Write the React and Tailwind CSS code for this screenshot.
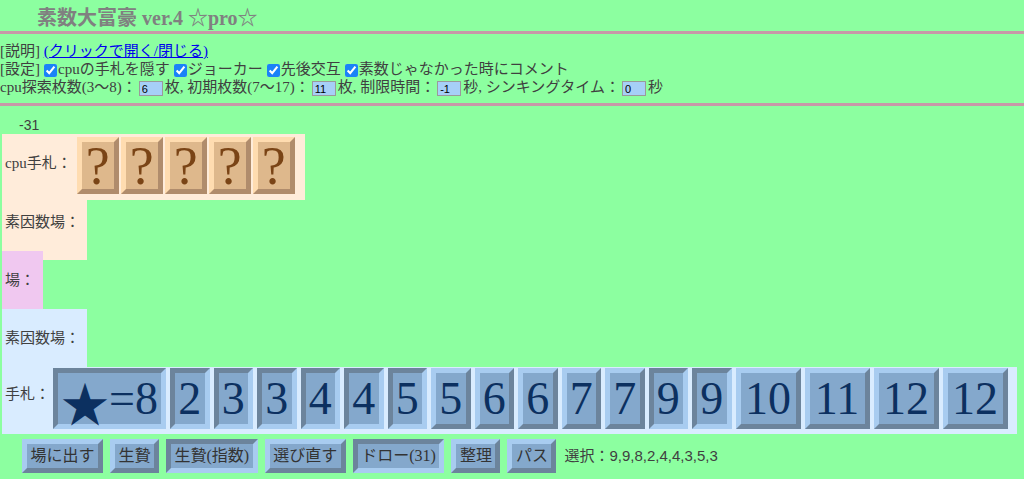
import React from 'react';

const serif = { fontFamily: '"Liberation Serif", "Noto Sans CJK JP", serif' };
const sans = { fontFamily: '"Liberation Sans", "Noto Sans CJK JP", sans-serif' };

const OUT = 'border-t-[#a8ccf0] border-l-[#a8ccf0] border-b-[#6c849c] border-r-[#6c849c]';
const IN = 'border-t-[#6c849c] border-l-[#6c849c] border-b-[#a8ccf0] border-r-[#a8ccf0]';

const hand = [
  { t: '★=8', sel: true },
  { t: '2', sel: true },
  { t: '3', sel: true },
  { t: '3', sel: true },
  { t: '4', sel: true },
  { t: '4', sel: true },
  { t: '5', sel: true },
  { t: '5', sel: false },
  { t: '6', sel: false },
  { t: '6', sel: false },
  { t: '7', sel: false },
  { t: '7', sel: false },
  { t: '9', sel: true },
  { t: '9', sel: true },
  { t: '10', sel: false },
  { t: '11', sel: false },
  { t: '12', sel: false },
  { t: '12', sel: false },
];

const buttons = [
  { t: '場に出す', sel: false },
  { t: '生贄', sel: false },
  { t: '生贄(指数)', sel: true },
  { t: '選び直す', sel: false },
  { t: 'ドロー(31)', sel: true },
  { t: '整理', sel: false },
  { t: 'パス', sel: false },
];

const cardWidth = (t) => {
  if (t.length === 1) return 'w-[39.5px]';
  if (t.length === 2) return 'w-[65px]';
  return 'w-[113px]';
};

const Card = ({ t, sel }) => (
  <div
    className={`flex h-[61px] shrink-0 items-center justify-center border-[5px] bg-[#84a8cc] text-[46px] leading-none text-[#0c3060] ${sel ? IN : OUT} ${cardWidth(t)}`}
  >
    {t.startsWith('★') ? (
      <>
        <span style={{ fontFamily: '"Noto Sans CJK JP", sans-serif' }} className="mt-[4px] text-[48px]">★</span>
        <span>=8</span>
      </>
    ) : (
      t
    )}
  </div>
);

const CpuCard = () => (
  <div className="flex h-[57px] w-[42px] items-center justify-center border-[5px] border-t-[#ffdcb0] border-l-[#ffdcb0] border-b-[#b08c6c] border-r-[#b08c6c] bg-[#deb88c] text-[54px] leading-none text-[#7a4416]">
    ?
  </div>
);

const Num = ({ v }) => (
  <input
    defaultValue={v}
    style={sans}
    className="mx-[2px] h-[15px] w-[24px] border border-[#9a9a9a] bg-[#a6cff7] px-[2px] align-middle text-[11px] leading-none text-black outline-none"
  />
);

const Check = () => (
  <input type="checkbox" defaultChecked className="ml-[4px] mr-[1px] h-[13px] w-[13px] align-middle accent-[#1a82f7]" />
);

export default function App() {
  return (
    <div style={serif} className="min-h-screen bg-[#8cffa0] text-[15px] text-[#404040]">
      <h1 className="pl-[37px] pt-[6px] text-[20px] font-bold leading-[24px] text-[#808080]">素数大富豪 ver.4 ☆pro☆</h1>
      <div className="mt-[1px] h-[3px] bg-[#c898a8]" />

      <div className="pt-[8px] leading-[18px]">
        <div>
          [説明] <span className="cursor-pointer text-[#0000ee] underline">(クリックで開く/閉じる)</span>
        </div>
        <div>
          [設定]
          <Check />cpuの手札を隠す
          <Check />ジョーカー
          <Check />先後交互
          <Check />素数じゃなかった時にコメント
        </div>
        <div>
          cpu探索枚数(3〜8)：<Num v="6" />枚, 初期枚数(7〜17)：<Num v="11" />枚, 制限時間：<Num v="-1" />秒, シンキングタイム：<Num v="0" />秒
        </div>
      </div>
      <div className="mt-[7px] h-[3px] bg-[#c898a8]" />

      <div style={sans} className="mt-[10px] pl-[19px] text-[14px] leading-[18px]">-31</div>

      <div className="pl-[2px]">
        {/* cpu */}
        <div className="flex w-fit items-center gap-[2px] bg-[#ffecda] pb-[6px] pl-[3px] pr-[10px] pt-[3px]">
          <span className="mr-[3px] -mt-[4px]">cpu手札：</span>
          {[0, 1, 2, 3, 4].map((i) => (
            <CpuCard key={i} />
          ))}
        </div>
        <div className="h-[60px] w-[85px] bg-[#ffecda] pl-[3px] pt-[13px] leading-[18px]">素因数場：</div>
        <div className="relative -mt-[9px] flex h-[58px] w-[41px] items-center bg-[#f0c8f0] pl-[3px]">場：</div>

        {/* player */}
        <div className="flex h-[58px] w-[85px] items-center bg-[#d9ecff] pl-[3px]">素因数場：</div>
        <div className="flex w-[1015px] items-center bg-[#d9ecff] pb-[5px] pl-[3px] pt-[1px]">
          <span className="mr-[3px] -mt-[8px] shrink-0">手札：</span>
          <div className="flex gap-[4px]">
            {hand.map((c, i) => (
              <Card key={i} {...c} />
            ))}
          </div>
        </div>

        <div className="mt-[5px] flex items-center gap-[7px] pl-[20px]">
          {buttons.map((b) => (
            <button
              key={b.t}
              className={`border-[5px] bg-[#84a8cc] px-[3.5px] py-[3px] text-[16px] leading-[18px] text-[#333] ${b.sel ? IN : OUT}`}
            >
              {b.t}
            </button>
          ))}
          <span className="ml-[1px]">
            選択：<span style={sans}>9,9,8,2,4,4,3,5,3</span>
          </span>
        </div>
      </div>
    </div>
  );
}
